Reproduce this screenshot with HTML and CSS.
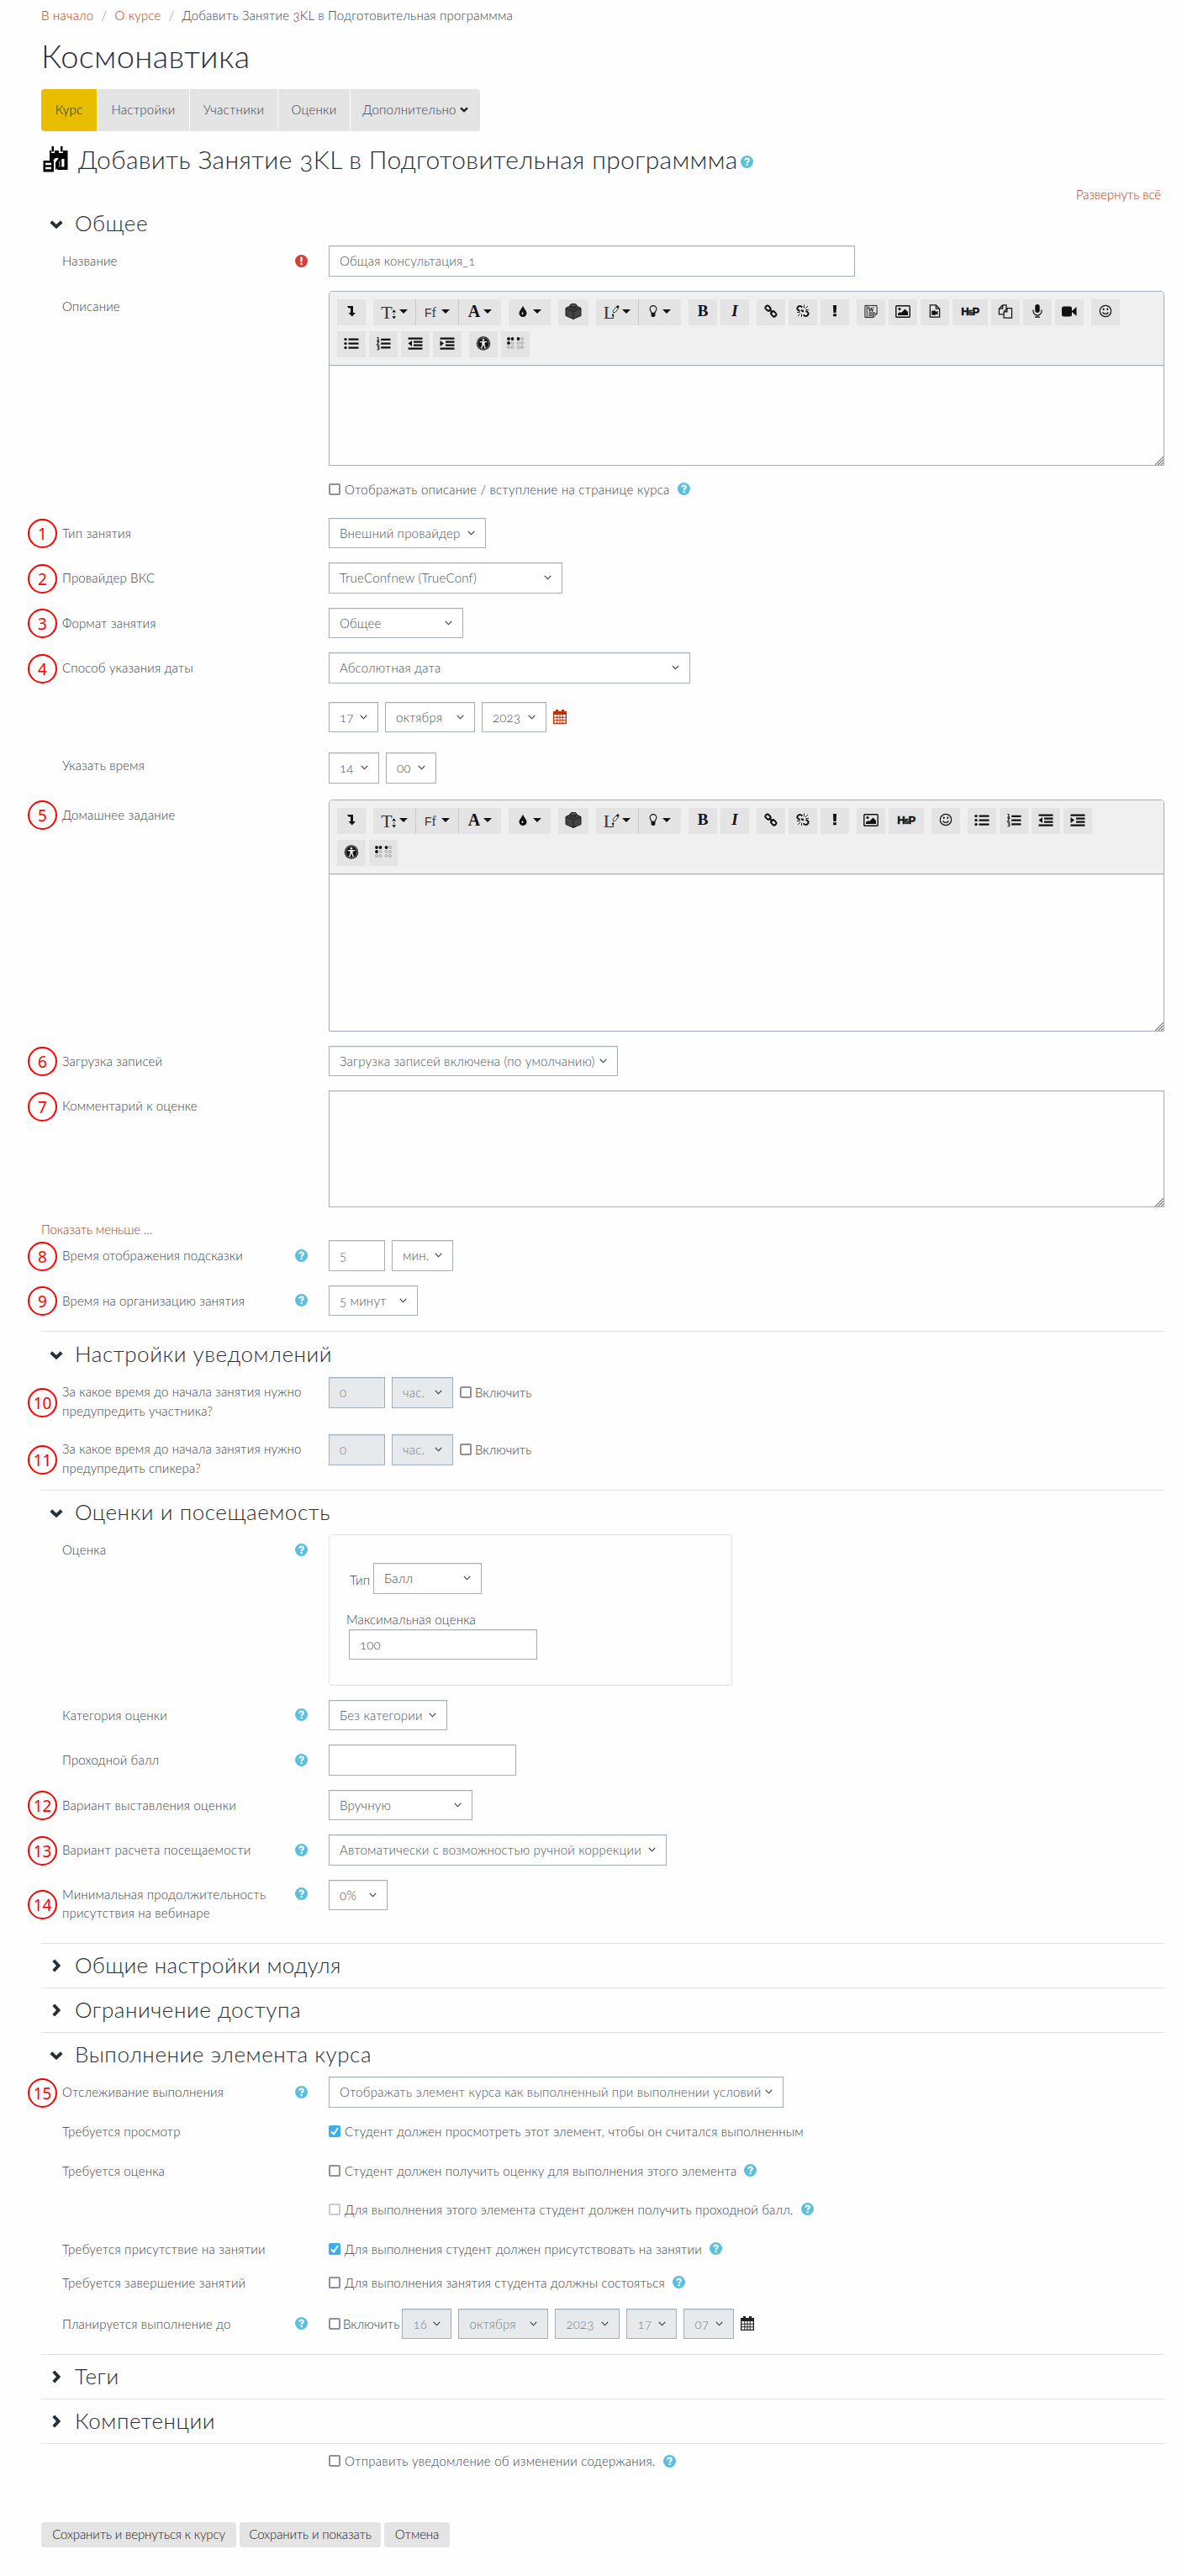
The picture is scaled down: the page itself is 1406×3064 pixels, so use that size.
FILE: index.html
```html
<!DOCTYPE html>
<html lang="ru">
<head>
<meta charset="utf-8">
<title>Добавить Занятие 3KL</title>
<link rel="stylesheet" href="styles.css">
</head>
<body>
<svg class="sprite" aria-hidden="true">
  <symbol id="down" viewBox="0 0 14 9"><path d="M1.400 1.600 7 6.800l5.600-5.200" fill="none" stroke="currentColor" stroke-width="3.500"/></symbol>
  <symbol id="arrow" viewBox="0 0 9 6"><path d="M.8.8 4.500 4.800 8.200.8" fill="none" stroke="currentColor" stroke-width="1.100"/></symbol>
  <symbol id="caret" viewBox="0 0 10 5"><path d="M0 0h10L5 5z"/></symbol>
  <symbol id="help" viewBox="0 0 14 14"><circle cx="7" cy="7" r="7" fill="#5bc0de"/><path d="M4.900 5.200C5 3.900 5.900 3.300 7 3.300s2.200.7 2.200 1.800C9.200 6.600 7.100 6.700 7.100 8.300" fill="none" stroke="#fff" stroke-width="1.800"/><rect x="6.100" y="9.300" width="2" height="2" fill="#fff"/></symbol>
  <symbol id="req" viewBox="0 0 14 14"><circle cx="7" cy="7" r="7" fill="#d43f3a"/><path d="M5.800 2.500h2.400L7.900 8H6.100z" fill="#fff"/><rect x="6" y="9" width="2" height="2.200" fill="#fff"/></symbol>
  <symbol id="cal" viewBox="0 0 16 17"><path d="M3 0h3v2h4V0h3v2h3v15H0V2h3z"/><path d="M1.300 6h3v2.700h-3zM5.300 6h2.200v2.700H5.300zM8.500 6h2.200v2.700H8.500zM11.700 6h3v2.700h-3zM1.300 9.700h3v2.500h-3zM5.300 9.700h2.200v2.500H5.300zM8.500 9.700h2.200v2.500H8.500zM11.700 9.700h3v2.500h-3zM1.300 13.200h3v2.500h-3zM5.300 13.200h2.200v2.500H5.300zM8.500 13.200h2.200v2.500H8.500zM11.700 13.200h3v2.500h-3z" fill="#fff"/></symbol>
  <symbol id="more" viewBox="0 0 16 16"><path d="M3 2h7v8h3l-4.200 4.500L4.500 10H7V4.500H4.500z"/></symbol>
  <symbol id="size" viewBox="0 0 18 18"><path d="M12 7.500 14.500 4 17 7.500zM12 12.500 14.500 16 17 12.500zM14 9h1v2h-1z" transform="translate(.5 .5)"/></symbol>
  <symbol id="drop" viewBox="0 0 12 16"><path d="M6 .5C7.500 5 10.800 7 10.800 10.500a4.800 4.300 0 0 1-9.600 0C1.200 7 4.500 5 6 .5z"/><path d="M5.200 8c.2 1.500-.8 1.800-.8 3a1.200 1.200 0 0 0 2.300 0c0-1.200-1.300-1.500-1.500-3z" fill="#e4e4e4"/></symbol>
  <symbol id="cube" viewBox="0 0 20 20"><path d="M1 6.500 10 2l9 4.500v9L10 19.500l-9-4z" fill="#444"/><path d="M1 6.500 10 10.500l9-4M10 10.500v9M1 6.500v9l9 4 9-4v-9L10 2z" fill="none" stroke="#1c1c1c"/><path d="M6 3.500v3c1 2 7 2 8 0v-3z" fill="#333"/><ellipse cx="10" cy="3.300" rx="4" ry="1.900" fill="#555" stroke="#1c1c1c"/></symbol>
  <symbol id="pen" viewBox="0 0 12 18"><path d="M4.500 10.500 4 8l4.500-5 2.500 2-4 5z" fill="none" stroke="#333"/><path d="M8 3.500 9.500 1.500Q11.500.5 11.800 3L10.500 5z"/><circle cx="4" cy="13.500" r="1.300"/></symbol>
  <symbol id="bulb" viewBox="0 0 10 16"><path d="M3 10C3 8 .9 7.500.9 4.700a4.100 4.100 0 0 1 8.200 0C9.100 7.500 7 8 7 10z" fill="none" stroke="currentColor" stroke-width="1.200"/><path d="M2.500 9.500h5V13L6.500 15h-3L2.500 13z"/></symbol>
  <symbol id="chain" viewBox="0 0 16 16"><g fill="none" stroke="currentColor" stroke-width="2"><rect x="-3.300" y="-2.300" width="6.600" height="4.800" rx="2.300" transform="translate(4.600 4.600) rotate(45)"/><rect x="-3.300" y="-2.300" width="6.600" height="4.800" rx="2.300" transform="translate(11.300 11.300) rotate(45)"/></g><path d="m6 6 4 4" stroke="currentColor" stroke-width="1.800"/></symbol>
  <symbol id="unchain" viewBox="0 0 16 16"><path d="M7.500 3.500Q4 .5 2 3.300T4.500 8M6 7l3 1.500M8.500 12.500q3.500 3 5.500.2T11.500 8" fill="none" stroke="currentColor" stroke-width="2"/><path d="M9.500 4.500v-4M11 5l3-3M11.500 6.500H15M1 9.500h3.500M5 11l-3 3M6.500 11.500V15" stroke="currentColor" stroke-width=".9"/></symbol>
  <symbol id="bang" viewBox="0 0 6 16"><path d="M.9 1h4.200L4.600 10H1.400zM1.100 11.300h3.800v3H1.100z"/></symbol>
  <symbol id="word" viewBox="0 0 18 18"><path d="M4 1.500h12.500v10.500L12 16.500H1.500v-15H4M4 1.500v15M16.500 12H12v4.500M6 10.500h8M6 12.500h5M6 14.500h5" fill="none" stroke="currentColor"/></symbol>
  <symbol id="image" viewBox="0 0 18 16"><rect x=".8" y="1.300" width="16.400" height="13.400" rx="1" fill="none" stroke="currentColor" stroke-width="1.400"/><circle cx="5" cy="5" r="1.600"/><path d="M3 12.500V10.500L5.500 8.500 7 9.500 11.500 5 15 8.500v4z"/></symbol>
  <symbol id="media" viewBox="0 0 14 17"><path d="M1 1h7.500L13 5.500V16H1zM8.500 1v4.500H13" fill="none" stroke="currentColor" stroke-width="1.300"/><path d="M3 8h5v1.700L10.700 8v5.500L8 12v1.500H3z"/></symbol>
  <symbol id="files" viewBox="0 0 18 18"><path d="M7 12.500H1V5.500L5.500 1H10v4M5.500 1v4.500H1M7 9.500 11 5h6v12H7zM11 5v4.500H7" fill="none" stroke="currentColor" stroke-width="1.300"/></symbol>
  <symbol id="mic" viewBox="0 0 12 16"><rect x="3.300" y="0" width="5.400" height="10" rx="2.700"/><path d="M1 6.500v1.500a5 5 0 0 0 10 0V6.500M6 12.500V15M3 15.200h6" fill="none" stroke="currentColor" stroke-width="1.200"/></symbol>
  <symbol id="video" viewBox="0 0 18 14"><rect x="0" y="1" width="12" height="12" rx="2.500"/><path d="M12 6.500 17.500 1.500v11L12 7.500z"/></symbol>
  <symbol id="smile" viewBox="0 0 16 16"><circle cx="8" cy="8" r="6.700" fill="none" stroke="currentColor" stroke-width="1.200"/><path d="M4.500 9.500q3.500 4 7 0" fill="none" stroke="currentColor" stroke-width="1.200"/><ellipse cx="5.700" cy="5.800" rx="1" ry="1.400"/><ellipse cx="10.300" cy="5.800" rx="1" ry="1.400"/></symbol>
  <symbol id="ul" viewBox="0 0 18 16"><path d="M5.500 2h12v2.300h-12zM5.500 7h12v2.300h-12zM5.500 12h12v2.300h-12z"/><circle cx="2" cy="3.100" r="1.700"/><circle cx="2" cy="8.100" r="1.700"/><circle cx="2" cy="13.100" r="1.700"/></symbol>
  <symbol id="ol" viewBox="0 0 18 18"><path d="M6 3h12v2.300H6zM6 8h12v2.300H6zM6 13h12v2.300H6z"/><path d="M1 1.500h1.500V5M.8 5.200h3M1 6.700h2.500L1 10.500h3M1 12.500h2.500L2.500 14.500q2 .3 1 2L1 17" fill="none" stroke="currentColor" stroke-width="1.100"/></symbol>
  <symbol id="outdent" viewBox="0 0 18 16"><path d="M.5 1h17v2.200H.5zM7 5h10.500v2.200H7zM7 9h10.500v2.200H7zM.5 13h17v2.200H.5zM.5 8 5 4.500v7z"/></symbol>
  <symbol id="indent" viewBox="0 0 18 16"><path d="M.5 1h17v2.200H.5zM7 5h10.500v2.200H7zM7 9h10.500v2.200H7zM.5 13h17v2.200H.5zM5 8 .5 4.500v7z"/></symbol>
  <symbol id="access" viewBox="0 0 18 18"><circle cx="9" cy="9" r="8.700"/><circle cx="9" cy="9" r="7.300" fill="none" stroke="#bbb" stroke-width=".7"/><circle cx="9" cy="4.600" r="1.300" fill="#fff"/><path d="M4.500 7h9M9 7v4M8 7v4l-1.500 4M10 7v4l1.500 4" stroke="#fff" stroke-width="1.400" fill="none"/></symbol>
  <symbol id="braille" viewBox="0 0 20 14"><g><circle cx="2" cy="2" r="1.900"/><circle cx="6.500" cy="2" r="1.900"/><circle cx="2" cy="7" r="1.900"/><circle cx="13.500" cy="2" r="1.900"/></g><g fill="none" stroke="#888" stroke-width=".7"><circle cx="6.500" cy="7" r="1.500"/><circle cx="2" cy="12" r="1.500"/><circle cx="6.500" cy="12" r="1.500"/><circle cx="18" cy="2" r="1.500"/><circle cx="13.500" cy="7" r="1.500"/><circle cx="18" cy="7" r="1.500"/><circle cx="13.500" cy="12" r="1.500"/><circle cx="18" cy="12" r="1.500"/></g></symbol>
  <symbol id="grip" viewBox="0 0 10 10"><path d="M0 10 10 0M3.500 10 10 3.500M7 10l3-3" stroke="#777" stroke-width="1.200"/></symbol>
  <symbol id="tick" viewBox="0 0 14 14"><path d="M3 7.500 6 10.500 11 3" fill="none" stroke="#fff" stroke-width="2"/></symbol>
</svg>

<main class="page">
  <nav class="crumbs"><a>В начало</a><i>/</i><a>О курсе</a><i>/</i><span>Добавить Занятие 3KL в Подготовительная программма</span></nav>
  <h1>Космонавтика</h1>
  <ul class="tabs">
    <li class="on w-66">Курс</li><li class="w-109">Настройки</li><li class="w-104">Участники</li><li class="w-85">Оценки</li><li class="w-154">Дополнительно<svg class="mini"><use href="#down"/></svg></li>
  </ul>
  <h2>
    <svg class="mod" viewBox="0 0 30 31"><path d="M8 5h2v3h4V5h5v3h5V5h5.500v23H17v-3.500h8.500V15H23l-3.500 3v6L15 28v-9l4-5h-4l-3 3H8z"/><path d="M10.500 0h2.500v6.500h-2.500zM21 0h2.500v6.500H21z"/><path d="M.5 17H13v13.500H.5z"/><path d="M3 21h7M3 26h7" stroke="#fff" stroke-width="2.500"/><path d="M21.300 16.500V25" stroke="#000" stroke-width="2"/><path d="M13.600 16v12" stroke="#fff"/></svg>
    <span>Добавить Занятие 3KL в Подготовительная программма</span><svg class="q"><use href="#help"/></svg>
  </h2>
  <p class="expand"><a>Развернуть всё</a></p>

  <section class="s-main">
    <h3><svg class="chev"><use href="#down"/></svg>Общее</h3>
    <div class="row"><div class="lab"><span>Название</span><svg class="q"><use href="#req"/></svg></div><div class="ctl"><span class="field w-626">Общая консультация_1</span></div></div>

    <div class="row editor-row"><div class="lab"><span>Описание</span></div>
      <div class="editor e-short">
        <div class="bar">
          <div class="g"><b><svg class="i16"><use href="#more"/></svg></b></div>
          <div class="g join"><b class="dd"><em class="t">T</em><svg class="i18 lap"><use href="#size"/></svg><svg class="car"><use href="#caret"/></svg></b><b class="dd"><em class="ff">F<u>f</u></em><svg class="car"><use href="#caret"/></svg></b><b class="dd"><em class="a">A</em><svg class="car"><use href="#caret"/></svg></b></div>
          <div class="g"><b class="dd gap"><svg class="i12"><use href="#drop"/></svg><svg class="car"><use href="#caret"/></svg></b></div>
          <div class="g"><b class="wide"><svg class="i20"><use href="#cube"/></svg></b></div>
          <div class="g join"><b class="dd"><em class="l">L</em><svg class="ipen"><use href="#pen"/></svg><svg class="car"><use href="#caret"/></svg></b><b class="dd gap"><svg class="i10"><use href="#bulb"/></svg><svg class="car"><use href="#caret"/></svg></b></div>
          <div class="g"><b><em class="bi">B</em></b><b><em class="bi it">I</em></b></div>
          <div class="g"><b><svg class="i16"><use href="#chain"/></svg></b><b><svg class="i16"><use href="#unchain"/></svg></b><b><svg class="i6"><use href="#bang"/></svg></b></div>
          <div class="g"><b class="wd"><svg class="i18"><use href="#word"/></svg><em>W</em></b><b><svg class="i18"><use href="#image"/></svg></b><b><svg class="i16"><use href="#media"/></svg></b><b class="h5p"><em>H<u>5</u>P</em></b><b><svg class="i18"><use href="#files"/></svg></b><b><svg class="i16"><use href="#mic"/></svg></b><b><svg class="i18"><use href="#video"/></svg></b></div>
          <div class="g"><b><svg class="i16"><use href="#smile"/></svg></b></div>
          <div class="g"><b><svg class="i18"><use href="#ul"/></svg></b><b><svg class="i18"><use href="#ol"/></svg></b><b><svg class="i18"><use href="#outdent"/></svg></b><b><svg class="i18"><use href="#indent"/></svg></b></div>
          <div class="g"><b><svg class="i18"><use href="#access"/></svg></b><b><svg class="i20"><use href="#braille"/></svg></b></div>
        </div>
        <div class="area"><svg class="grip"><use href="#grip"/></svg></div>
      </div>
    </div>

    <div class="row check m17"><div class="lab"></div><div class="ctl wider"><i class="cb"></i><span>Отображать описание / вступление на странице курса</span><svg class="q"><use href="#help"/></svg></div></div>
    <div class="row"><i class="num">1</i><div class="lab"><span>Тип занятия</span></div><div class="ctl"><span class="field sel w-187">Внешний провайдер<svg class="ar"><use href="#arrow"/></svg></span></div></div>
    <div class="row"><i class="num">2</i><div class="lab"><span>Провайдер ВКС</span></div><div class="ctl"><span class="field sel w-278">TrueConfnew (TrueConf)<svg class="ar"><use href="#arrow"/></svg></span></div></div>
    <div class="row"><i class="num">3</i><div class="lab"><span>Формат занятия</span></div><div class="ctl"><span class="field sel w-160">Общее<svg class="ar"><use href="#arrow"/></svg></span></div></div>
    <div class="row"><i class="num">4</i><div class="lab"><span>Способ указания даты</span></div><div class="ctl"><span class="field sel w-430">Абсолютная дата<svg class="ar"><use href="#arrow"/></svg></span></div></div>
    <div class="row date"><div class="lab"></div><div class="ctl g8"><span class="field sel w-59">17<svg class="ar"><use href="#arrow"/></svg></span><span class="field sel w-107">октября<svg class="ar"><use href="#arrow"/></svg></span><span class="field sel w-77">2023<svg class="ar"><use href="#arrow"/></svg></span><svg class="cal red"><use href="#cal"/></svg></div></div>
    <div class="row time"><div class="lab"><span>Указать время</span></div><div class="ctl g8"><span class="field sel w-60">14<svg class="ar"><use href="#arrow"/></svg></span><span class="field sel w-60">00<svg class="ar"><use href="#arrow"/></svg></span></div></div>

    <div class="row editor-row"><i class="num">5</i><div class="lab"><span>Домашнее задание</span></div>
      <div class="editor e-tall">
        <div class="bar">
          <div class="g"><b><svg class="i16"><use href="#more"/></svg></b></div>
          <div class="g join"><b class="dd"><em class="t">T</em><svg class="i18 lap"><use href="#size"/></svg><svg class="car"><use href="#caret"/></svg></b><b class="dd"><em class="ff">F<u>f</u></em><svg class="car"><use href="#caret"/></svg></b><b class="dd"><em class="a">A</em><svg class="car"><use href="#caret"/></svg></b></div>
          <div class="g"><b class="dd gap"><svg class="i12"><use href="#drop"/></svg><svg class="car"><use href="#caret"/></svg></b></div>
          <div class="g"><b class="wide"><svg class="i20"><use href="#cube"/></svg></b></div>
          <div class="g join"><b class="dd"><em class="l">L</em><svg class="ipen"><use href="#pen"/></svg><svg class="car"><use href="#caret"/></svg></b><b class="dd gap"><svg class="i10"><use href="#bulb"/></svg><svg class="car"><use href="#caret"/></svg></b></div>
          <div class="g"><b><em class="bi">B</em></b><b><em class="bi it">I</em></b></div>
          <div class="g"><b><svg class="i16"><use href="#chain"/></svg></b><b><svg class="i16"><use href="#unchain"/></svg></b><b><svg class="i6"><use href="#bang"/></svg></b></div>
          <div class="g"><b><svg class="i18"><use href="#image"/></svg></b><b class="h5p"><em>H<u>5</u>P</em></b></div>
          <div class="g"><b><svg class="i16"><use href="#smile"/></svg></b></div>
          <div class="g"><b><svg class="i18"><use href="#ul"/></svg></b><b><svg class="i18"><use href="#ol"/></svg></b><b><svg class="i18"><use href="#outdent"/></svg></b><b><svg class="i18"><use href="#indent"/></svg></b></div>
          <div class="g"><b><svg class="i18"><use href="#access"/></svg></b><b><svg class="i20"><use href="#braille"/></svg></b></div>
        </div>
        <div class="area"><svg class="grip"><use href="#grip"/></svg></div>
      </div>
    </div>

    <div class="row"><i class="num">6</i><div class="lab"><span>Загрузка записей</span></div><div class="ctl"><span class="field sel w-344">Загрузка записей включена (по умолчанию)<svg class="ar"><use href="#arrow"/></svg></span></div></div>
    <div class="row ta-row"><i class="num">7</i><div class="lab"><span>Комментарий к оценке</span></div><div class="ta"><svg class="grip"><use href="#grip"/></svg></div></div>
    <p class="less"><a>Показать меньше ...</a></p>
    <div class="row"><i class="num">8</i><div class="lab"><span>Время отображения подсказки</span><svg class="q"><use href="#help"/></svg></div><div class="ctl g8"><span class="field w-67">5</span><span class="field sel w-72">мин.<svg class="ar"><use href="#arrow"/></svg></span></div></div>
    <div class="row"><i class="num">9</i><div class="lab"><span>Время на организацию занятия</span><svg class="q"><use href="#help"/></svg></div><div class="ctl"><span class="field sel w-106">5 минут<svg class="ar"><use href="#arrow"/></svg></span></div></div>
  </section>

  <section class="s-notify">
    <h3><svg class="chev"><use href="#down"/></svg>Настройки уведомлений</h3>
    <div class="row two"><i class="num">10</i><div class="lab"><span>За какое время до начала занятия нужно предупредить участника?</span></div><div class="ctl g8"><span class="field off w-67">0</span><span class="field sel off w-72">час.<svg class="ar"><use href="#arrow"/></svg></span><label><i class="cb"></i>Включить</label></div></div>
    <div class="row two"><i class="num">11</i><div class="lab"><span>За какое время до начала занятия нужно предупредить спикера?</span></div><div class="ctl g8"><span class="field off w-67">0</span><span class="field sel off w-72">час.<svg class="ar"><use href="#arrow"/></svg></span><label><i class="cb"></i>Включить</label></div></div>
  </section>

  <section class="s-grade">
    <h3><svg class="chev"><use href="#down"/></svg>Оценки и посещаемость</h3>
    <div class="row grade"><div class="lab"><span>Оценка</span><svg class="q"><use href="#help"/></svg></div>
      <div class="box"><div class="type"><span>Тип</span><span class="field sel w-129">Балл<svg class="ar"><use href="#arrow"/></svg></span></div><div class="max">Максимальная оценка</div><span class="field w-224">100</span></div></div>
    <div class="row"><div class="lab"><span>Категория оценки</span><svg class="q"><use href="#help"/></svg></div><div class="ctl"><span class="field sel w-141">Без категории<svg class="ar"><use href="#arrow"/></svg></span></div></div>
    <div class="row"><div class="lab"><span>Проходной балл</span><svg class="q"><use href="#help"/></svg></div><div class="ctl"><span class="field w-223"></span></div></div>
    <div class="row"><i class="num">12</i><div class="lab wider"><span>Вариант выставления оценки</span></div><div class="ctl"><span class="field sel w-171">Вручную<svg class="ar"><use href="#arrow"/></svg></span></div></div>
    <div class="row"><i class="num">13</i><div class="lab wider"><span>Вариант расчета посещаемости</span><svg class="q"><use href="#help"/></svg></div><div class="ctl"><span class="field sel w-402">Автоматически с возможностью ручной коррекции<svg class="ar"><use href="#arrow"/></svg></span></div></div>
    <div class="row two"><i class="num">14</i><div class="lab"><span>Минимальная продолжительность присутствия на вебинаре</span><svg class="q"><use href="#help"/></svg></div><div class="ctl"><span class="field sel w-70">0%<svg class="ar"><use href="#arrow"/></svg></span></div></div>
  </section>

  <section class="s-shut"><h3 class="tight"><svg class="chev r"><use href="#down"/></svg>Общие настройки модуля</h3></section>
  <section class="s-shut"><h3><svg class="chev r"><use href="#down"/></svg>Ограничение доступа</h3></section>

  <section class="s-done">
    <h3><svg class="chev"><use href="#down"/></svg>Выполнение элемента курса</h3>
    <div class="row"><i class="num">15</i><div class="lab"><span>Отслеживание выполнения</span><svg class="q"><use href="#help"/></svg></div><div class="ctl"><span class="field sel w-541">Отображать элемент курса как выполненный при выполнении условий<svg class="ar"><use href="#arrow"/></svg></span></div></div>
    <div class="row check m19"><div class="lab"><span>Требуется просмотр</span></div><div class="ctl"><i class="cb on"><svg><use href="#tick"/></svg></i><span>Студент должен просмотреть этот элемент, чтобы он считался выполненным</span></div></div>
    <div class="row check m18"><div class="lab"><span>Требуется оценка</span></div><div class="ctl"><i class="cb"></i><span>Студент должен получить оценку для выполнения этого элемента</span><svg class="q"><use href="#help"/></svg></div></div>
    <div class="row check m19"><div class="lab"></div><div class="ctl"><i class="cb dim"></i><span>Для выполнения этого элемента студент должен получить проходной балл.</span><svg class="q"><use href="#help"/></svg></div></div>
    <div class="row check m12"><div class="lab wider"><span>Требуется присутствие на занятии</span></div><div class="ctl"><i class="cb on"><svg><use href="#tick"/></svg></i><span>Для выполнения студент должен присутствовать на занятии</span><svg class="q"><use href="#help"/></svg></div></div>
    <div class="row check m14"><div class="lab wider"><span>Требуется завершение занятий</span></div><div class="ctl"><i class="cb"></i><span>Для выполнения занятия студента должны состояться</span><svg class="q"><use href="#help"/></svg></div></div>
    <div class="row"><div class="lab"><span>Планируется выполнение до</span><svg class="q"><use href="#help"/></svg></div><div class="ctl g8"><label class="until"><i class="cb"></i>Включить</label><span class="field sel off w-59">16<svg class="ar"><use href="#arrow"/></svg></span><span class="field sel off w-107">октября<svg class="ar"><use href="#arrow"/></svg></span><span class="field sel off w-77">2023<svg class="ar"><use href="#arrow"/></svg></span><span class="field sel off w-60">17<svg class="ar"><use href="#arrow"/></svg></span><span class="field sel off w-60">07<svg class="ar"><use href="#arrow"/></svg></span><svg class="cal"><use href="#cal"/></svg></div></div>
  </section>

  <section class="s-shut"><h3><svg class="chev r"><use href="#down"/></svg>Теги</h3></section>
  <section class="s-shut"><h3><svg class="chev r"><use href="#down"/></svg>Компетенции</h3></section>

  <section class="s-end">
    <div class="row check"><div class="lab"></div><div class="ctl wider"><i class="cb"></i><span>Отправить уведомление об изменении содержания.</span><svg class="q"><use href="#help"/></svg></div></div>
    <div class="actions"><button class="w-232">Сохранить и вернуться к курсу</button><button class="w-168">Сохранить и показать</button><button class="w-78">Отмена</button></div>
  </section>
</main>
</body>
</html>
```
FILE: styles.css
```css
* { box-sizing: border-box; }
body {
  margin: 0;
  background: #fefefe;
  color: #3a4046;
  font: 300 15px/22.500px Lato, "Open Sans", sans-serif;
  letter-spacing: .16px;
  font-variant-numeric: oldstyle-nums;
}
h1, h2, h3, p, ul { margin: 0; padding: 0; font-weight: 300; }
i, em { font-style: normal; }
u { text-decoration: none; }
svg { display: block; flex: none; fill: currentColor; }
.sprite { position: absolute; width: 0; height: 0; }
.page { height: 3064px; padding: 7px 21px 0 49px; }
a { color: #b93a0a; }

.crumbs { display: flex; height: 34px; letter-spacing: .2px; }
.crumbs i { width: 25px; text-align: center; color: #868e96; }
h1 { height: 65px; font-size: 38px; line-height: 51px; letter-spacing: .35px; color: #262e36; }
.tabs { display: flex; gap: 1px; height: 50px; list-style: none; }
.tabs li { display: flex; align-items: center; justify-content: center; background: #e4e4e4; letter-spacing: .24px; padding-bottom: 1px; }
.tabs .on { background: #e8bd00; color: #222; border-radius: 4px 0 0 4px; }
.tabs li:last-child { border-radius: 0 4px 4px 0; }
.mini { width: 10px; height: 7px; margin-left: 4px; color: #222; }
h2 { display: flex; align-items: center; height: 70px; font-size: 30px; line-height: 40px; letter-spacing: .36px; color: #262e36; }
h2 span { padding-bottom: 4px; white-space: nowrap; }
.mod { width: 30px; height: 31px; margin: 0 12px 3px 2px; color: #000; }
h2 .q { margin: 3px 0 0 3px; }
.expand { height: 13px; padding-right: 4px; text-align: right; letter-spacing: -.09px; line-height: 11px; }

.q { width: 15px; height: 15px; }
h3 { display: flex; align-items: center; height: 52px; padding: 0 0 3px 10px; font-size: 26px; line-height: 36px; letter-spacing: .57px; color: #262e36; }
h3.tight { letter-spacing: .35px; }
.chev { width: 16px; height: 10px; margin: 4px 14px 0 0; }
.chev.r { transform: rotate(-90deg); margin-top: 2px; }
section { border-top: 1px solid #dee2e6; }
.s-main { height: 1344px; border-top: 1px solid transparent; }
.s-notify { height: 189px; }
.s-notify h3 { height: 54px; }
.s-grade { height: 539px; }
.s-shut { height: 53px; }
.s-done { height: 383px; }
.s-end { padding-top: 9px; }

.row { position: relative; display: grid; grid-template-columns: 317px 1fr; height: 36.500px; margin-bottom: 17px; padding-left: 25px; }
.lab { display: flex; justify-content: space-between; align-items: flex-start; padding: 7px 25px 0 0; }
.lab span { width: 278px; margin-right: -30px; flex: none; }
.lab .q { margin-top: 3.500px; }
.wider { letter-spacing: .24px; }
.two .lab { padding-top: 6px; }
.two .lab span { width: 290px; margin-right: -37px; }
.ctl { display: flex; align-items: center; height: 36.500px; }
.g8 { gap: 8px; }
.two { height: 51px; }
.field { display: flex; align-items: center; height: 36.500px; padding: 0 12px; border: 1px solid #a4aeb8; background: #fff; color: #495057; box-shadow: inset 0 2px 1px -1px #e8ebee; white-space: nowrap; letter-spacing: .2px; }
.sel { justify-content: space-between; }
.ar { width: 9px; height: 6px; color: #333; }
.off { background: #e6eaed; color: #767d84; box-shadow: inset 0 2px 1px -1px #d4d9dd; }
.check { height: 28px; }
.check .lab { padding-top: 0; }
.check .ctl { height: 22.500px; align-items: flex-start; }
.cb { flex: none; width: 14px; height: 14px; margin: 4px 5px 0 0; border: 2px solid #8f8f9d; border-radius: 2px; background: #fff; }
.cb.dim { border-color: #c9c9d0; }
.cb.on { border: 0; background: #3daee9; }
.cb svg { width: 14px; height: 14px; }
.check .q { margin: 3.500px 0 0 9px; }
label { display: flex; letter-spacing: .05px; }
.g8 .cb { margin-right: 4px; }
.until { margin-right: -5px; }
.until .cb { margin-right: 3px; }
.m19 { margin-bottom: 19px; }
.m18 { margin-bottom: 18px; }
.m12 { margin-bottom: 12px; }
.m14 { margin-bottom: 14px; }
.date { margin: 22px 0 24px; }
.time { margin-bottom: 19px; }
.time .lab { padding-top: 4px; }
.cal { width: 16px; height: 17px; color: #222; margin-bottom: 1px; }
.cal.red { color: #bf2f00; }

.num { position: absolute; left: -16px; top: 1.500px; width: 35px; height: 35px; border: 2px solid #f00; border-radius: 50%; color: #f00; font: 400 19px/33px "Noto Sans", sans-serif; font-variant-numeric: lining-nums; text-align: center; letter-spacing: 0; }
.two .num { top: 12.500px; }

.editor-row { height: auto; margin-bottom: 16.500px; }
.editor { display: flex; flex-direction: column; border: 1px solid #a4aeb8; border-radius: 4px 4px 0 0; }
.e-short { height: 208.500px; }
.e-tall { height: 276.500px; }
.bar { display: flex; flex-wrap: wrap; align-content: flex-start; gap: 7px 9px; height: 88px; padding: 9px 40px 0 9px; background: #f0f0f0; border-bottom: 1px solid #a4aeb8; border-radius: 3px 3px 0 0; }
.area { position: relative; flex: 1; box-shadow: inset 0 2px 1px -1px #e8ebee; }
.grip { position: absolute; right: 0; bottom: 0; width: 10px; height: 10px; }
.g { display: flex; gap: 4px; }
.join { gap: 1px; }
.join b + b { box-shadow: -1px 0 #c8c8c8; }
.g b { display: flex; align-items: center; justify-content: center; width: 34px; height: 31px; background: #e4e4e4; color: #111; font-weight: 400; letter-spacing: 0; padding-bottom: 2px; }
.g .dd { width: 50px; }
.g .wide { width: 36px; }
.g .gap { gap: 6px; }
.g .h5p { width: 42px; }
.i20 { width: 20px; height: 20px; }
.i18 { width: 18px; height: 17px; }
.i16 { width: 16px; height: 16px; }
.i12 { width: 12px; height: 15px; }
.i10 { width: 10px; height: 15px; }
.i6 { width: 6px; height: 16px; }
.car { width: 10px; height: 5px; }
.lap { margin: 5px 3px 0 -13px; }
.t, .l { margin-top: 4px; font: 400 22px/20px "Liberation Serif", serif; color: #333; }
.ipen { width: 12px; height: 17px; margin: 0 3px 0 -6px; }
.a { font: 700 20px/20px "Liberation Serif", serif; margin-right: 4px; }
.ff { font: 400 14px/20px "Liberation Sans", sans-serif; color: #333; margin: 4px 6px 0 0; }
.ff u { font-family: "Liberation Serif", serif; font-size: 16px; }
.bi { font: 700 19px/20px "Liberation Serif", serif; }
.it { font-style: italic; }
.wd { position: relative; }
.wd em { position: absolute; left: 0; right: 0; top: 9px; text-align: center; font: 700 8px/8px "Liberation Serif", serif; }
.h5p em { font: 900 13px/14px "Liberation Sans", sans-serif; letter-spacing: -.5px; -webkit-text-stroke: .5px; margin-top: 3px; }
.h5p u { font-size: 9px; }

.ta-row { height: 138.500px; }
.ta { position: relative; border: 1px solid #a4aeb8; box-shadow: inset 0 2px 1px -1px #e8ebee; }
.less { height: 23px; margin-top: -.5px; letter-spacing: -.1px; }
.less a { position: relative; top: -1px; }
.box { width: 480px; height: 180px; padding: 33px 0 0 23px; border: 1px solid #dee2e6; border-radius: 4px; }
.grade { height: 180px; margin-bottom: 16.500px; }
.type { display: flex; gap: 3px; }
.type > span:first-child { width: 26px; padding: 9px 0 0 1px; }
.max { margin: 19px 0 0 -3px; height: 23px; }
.box > .field { margin-left: 0; }
.actions { display: flex; gap: 4px; margin-top: 56px; }
button { height: 30px; padding: 0 0 1px; border: 0; border-radius: 4px; background: #e4e4e4; color: #1d2124; font: inherit; letter-spacing: -.14px; }

.w-59 { width: 59px; } .w-60 { width: 60px; } .w-66 { width: 66px; } .w-67 { width: 67px; }
.w-70 { width: 70px; } .w-72 { width: 73px; } .w-77 { width: 77px; } .w-78 { width: 78px; }
.w-85 { width: 85px; } .w-104 { width: 104px; } .w-106 { width: 106px; } .w-107 { width: 107px; }
.w-109 { width: 109px; } .w-129 { width: 129px; } .w-141 { width: 141px; } .w-154 { width: 154px; }
.w-160 { width: 160px; } .w-168 { width: 168px; } .w-171 { width: 171px; } .w-187 { width: 187px; }
.w-223 { width: 223px; } .w-224 { width: 224px; } .w-232 { width: 232px; } .w-278 { width: 278px; }
.w-344 { width: 344px; } .w-402 { width: 402px; } .w-430 { width: 430px; } .w-541 { width: 541px; }
.w-626 { width: 626px; }
```
